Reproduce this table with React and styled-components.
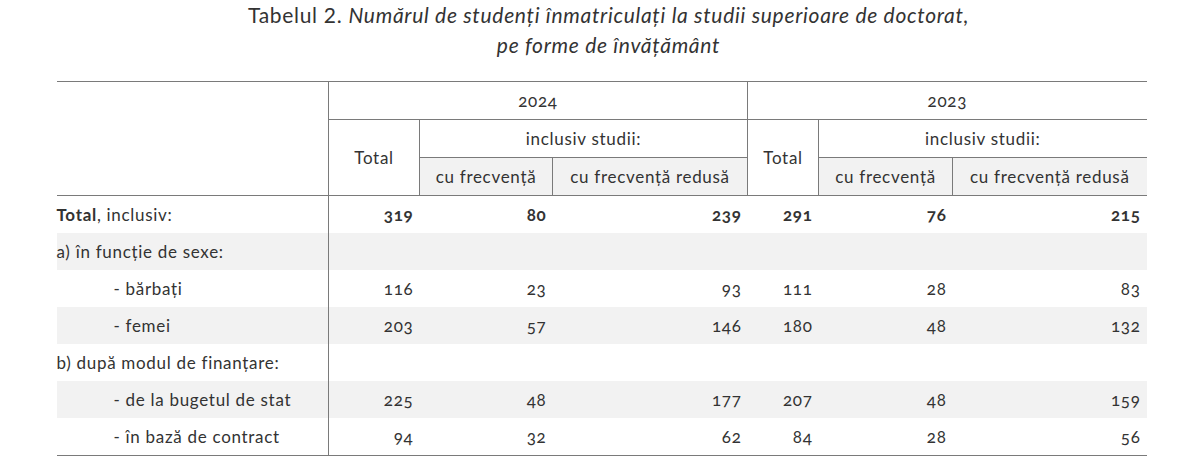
import React from 'react'
import styled, { createGlobalStyle } from 'styled-components'

const GlobalStyle = createGlobalStyle`
    body {
        margin: 0;
        background: #fff;
        font-family: Lato, "Open Sans", sans-serif;
        color: #333;
    }
`

const Wrapper = styled.div`
    width: 1090px;
    margin: 0 auto;
`

const Caption = styled.div`
    text-align: center;
    font-size: 21px;
    line-height: 30px;
    letter-spacing: 0.7px;
    color: #333;
    margin-bottom: 21px;
    padding-left: 14px;
`

const Em = styled.em`
    font-style: italic;
`

const Table = styled.table`
    width: 1090px;
    border-collapse: collapse;
    table-layout: fixed;
    font-size: 17px;
    letter-spacing: 0.7px;
    color: #333;
    font-variant-numeric: oldstyle-nums;
`

const HeadCell = styled.th`
    height: 37px;
    padding: 0 4px;
    font-weight: 400;
    text-align: center;
    vertical-align: middle;
    white-space: nowrap;
    border-top: 1px solid #7a7a7a;
    border-bottom: 1px solid #7a7a7a;
    border-left: ${({$first}) => $first ? 'none' : '1px solid #7a7a7a'};
    border-right: ${({$first}) => $first ? '1px solid #7a7a7a' : 'none'};
    background: ${({$shade}) => $shade ? '#f2f2f2' : '#fff'};
`

const Row = styled.tr`
    background: ${({$shade}) => $shade ? '#f2f2f2' : 'transparent'};
    &:last-child td {
        border-bottom: 1px solid #7a7a7a;
    }
`

const LabelCell = styled.td`
    height: 37px;
    padding: 0 0 0 ${({$indent}) => $indent ? '57px' : '0'};
    border-right: 1px solid #7a7a7a;
    white-space: nowrap;
`

const Strong = styled.b`
    font-weight: 700;
`

const NumCell = styled.td`
    text-align: right;
    padding: 0 6px;
    font-weight: ${({$bold}) => $bold ? 700 : 400};
`

const rows = [
    { label: <><Strong>Total</Strong>, inclusiv:</>, values: [319, 80, 239, 291, 76, 215], bold: true },
    { label: 'a) în funcție de sexe:', values: [], shade: true },
    { label: '- bărbați', values: [116, 23, 93, 111, 28, 83], indent: true },
    { label: '- femei', values: [203, 57, 146, 180, 48, 132], indent: true, shade: true },
    { label: 'b) după modul de finanțare:', values: [] },
    { label: '- de la bugetul de stat', values: [225, 48, 177, 207, 48, 159], indent: true, shade: true },
    { label: '- în bază de contract', values: [94, 32, 62, 84, 28, 56], indent: true },
]

const widths = [272, 91, 133, 195, 71, 134, 194]

const App = () => {
  return (
    <>
      <GlobalStyle />
      <Wrapper>
        <Caption>
          Tabelul 2. <Em>Numărul de studenți înmatriculați la studii superioare de doctorat,</Em>
          <br />
          <Em>pe forme de învățământ</Em>
        </Caption>
        <Table>
          <colgroup>
            {widths.map((w, i) => <col key={i} style={{ width: w }} />)}
          </colgroup>
          <thead>
            <tr>
              <HeadCell rowSpan={3} $first />
              <HeadCell colSpan={3}>2024</HeadCell>
              <HeadCell colSpan={3}>2023</HeadCell>
            </tr>
            <tr>
              <HeadCell rowSpan={2}>Total</HeadCell>
              <HeadCell colSpan={2}>inclusiv studii:</HeadCell>
              <HeadCell rowSpan={2}>Total</HeadCell>
              <HeadCell colSpan={2}>inclusiv studii:</HeadCell>
            </tr>
            <tr>
              <HeadCell $shade>cu frecvență</HeadCell>
              <HeadCell $shade>cu frecvență redusă</HeadCell>
              <HeadCell $shade>cu frecvență</HeadCell>
              <HeadCell $shade>cu frecvență redusă</HeadCell>
            </tr>
          </thead>
          <tbody>
            {rows.map((r, i) => (
              <Row key={i} $shade={r.shade}>
                <LabelCell $indent={r.indent}>{r.label}</LabelCell>
                {[0, 1, 2, 3, 4, 5].map(j => (
                  <NumCell key={j} $bold={r.bold}>{r.values[j]}</NumCell>
                ))}
              </Row>
            ))}
          </tbody>
        </Table>
      </Wrapper>
    </>
  )
}

export default App
